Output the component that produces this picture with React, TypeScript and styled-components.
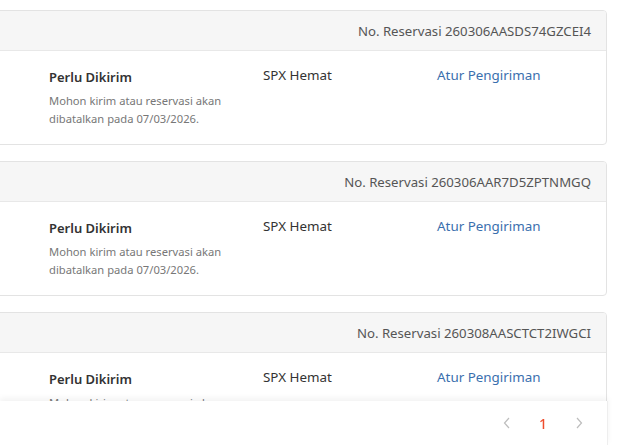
import React from 'react';
import styled, { createGlobalStyle } from 'styled-components';

const GlobalStyle = createGlobalStyle`
  html, body {
    margin: 0;
    padding: 0;
    background: #ffffff;
  }
  body {
    font-family: 'Noto Sans', 'Open Sans', sans-serif;
    overflow: hidden;
  }
`;

type Order = {
  id: string;
  status: string;
  note: string;
  courier: string;
  action: string;
};

const orders: Order[] = [
  {
    id: '260306AASDS74GZCEI4',
    status: 'Perlu Dikirim',
    note: 'Mohon kirim atau reservasi akan dibatalkan pada 07/03/2026.',
    courier: 'SPX Hemat',
    action: 'Atur Pengiriman',
  },
  {
    id: '260306AAR7D5ZPTNMGQ',
    status: 'Perlu Dikirim',
    note: 'Mohon kirim atau reservasi akan dibatalkan pada 07/03/2026.',
    courier: 'SPX Hemat',
    action: 'Atur Pengiriman',
  },
  {
    id: '260308AASCTCT2IWGCI',
    status: 'Perlu Dikirim',
    note: 'Mohon kirim atau reservasi akan dibatalkan pada 07/03/2026.',
    courier: 'SPX Hemat',
    action: 'Atur Pengiriman',
  },
];

const Page = styled.div`
  padding: 10px 16px 0 0;
  height: 445px;
  box-sizing: border-box;
  overflow: hidden;
`;

const Card = styled.div`
  margin-left: -20px;
  margin-bottom: 16px;
  border: 1px solid #e3e3e3;
  border-radius: 4px;
  background: #fff;
  overflow: hidden;
`;

const CardHeader = styled.div`
  height: 39px;
  display: flex;
  align-items: center;
  justify-content: flex-end;
  padding-right: 15px;
  background: #f6f6f6;
  border-bottom: 1px solid #e8e8e8;
  font-size: 13.2px;
  color: #555;
`;

const CardBody = styled.div`
  height: 93px;
  box-sizing: border-box;
  display: grid;
  grid-template-columns: 214px 174px 1fr;
  align-items: start;
  padding: 17px 0 0 68px;
`;

const Status = styled.div`
  display: flex;
  flex-direction: column;
`;

const StatusTitle = styled.div`
  font-size: 13px;
  font-weight: 600;
  line-height: 18px;
  color: #333;
`;

const StatusNote = styled.div`
  margin-top: 6px;
  width: 182px;
  font-size: 11.2px;
  line-height: 18px;
  color: #777;
`;

const Courier = styled.div`
  font-size: 13.4px;
  line-height: 18px;
  margin-top: -2px;
  color: #333;
`;

const ActionLink = styled.a`
  display: block;
  font-size: 13.4px;
  line-height: 18px;
  margin-top: -2px;
  color: #3a6fae;
  text-decoration: none;
  cursor: pointer;
`;

const Footer = styled.div`
  position: fixed;
  left: 0;
  right: 15px;
  bottom: 0;
  height: 44px;
  background: #fff;
  box-shadow: 0 -3px 6px rgba(0, 0, 0, 0.05);
  border-right: 1px solid #eee;
  display: flex;
  align-items: center;
  justify-content: flex-end;
  padding-right: 10px;
`;

const PageButton = styled.button<{ active?: boolean }>`
  width: 36px;
  height: 32px;
  border: none;
  background: transparent;
  padding: 0;
  display: flex;
  align-items: center;
  justify-content: center;
  font-family: 'Noto Sans', sans-serif;
  font-size: 14px;
  font-weight: 500;
  color: ${({ active }) => (active ? '#ee4d2d' : '#bbb')};
  cursor: pointer;
`;

const Chevron = ({ dir }: { dir: 'left' | 'right' }) => (
  <svg width="8" height="12" viewBox="0 0 8 12">
    <polyline
      points={dir === 'left' ? '6,1 1.5,6 6,11' : '2,1 6.5,6 2,11'}
      fill="none"
      stroke="#bdbdbd"
      strokeWidth="1.2"
    />
  </svg>
);

const App = () => (
  <>
    <GlobalStyle />
    <Page>
      {orders.map((o) => (
        <Card key={o.id}>
          <CardHeader>No. Reservasi {o.id}</CardHeader>
          <CardBody>
            <Status>
              <StatusTitle>{o.status}</StatusTitle>
              <StatusNote>{o.note}</StatusNote>
            </Status>
            <Courier>{o.courier}</Courier>
            <ActionLink>{o.action}</ActionLink>
          </CardBody>
        </Card>
      ))}
    </Page>
    <Footer>
      <PageButton>
        <Chevron dir="left" />
      </PageButton>
      <PageButton active>1</PageButton>
      <PageButton>
        <Chevron dir="right" />
      </PageButton>
    </Footer>
  </>
);

export default App;
